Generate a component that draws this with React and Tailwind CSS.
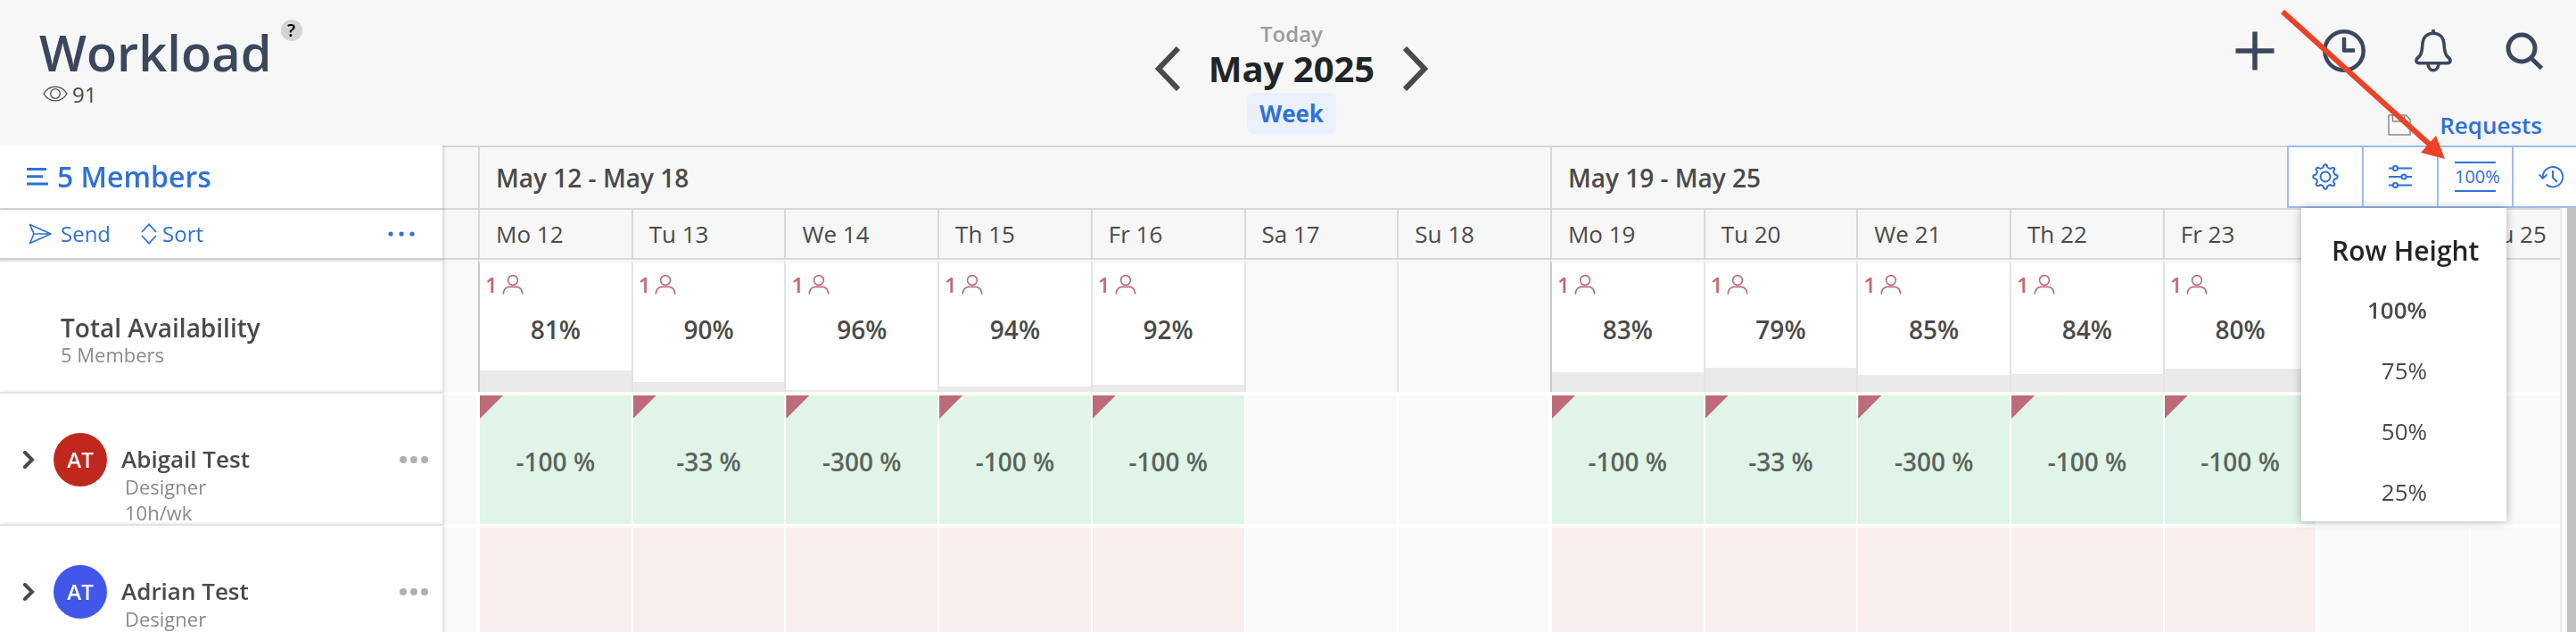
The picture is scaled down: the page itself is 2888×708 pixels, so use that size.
import React, { useState } from 'react';

const weeks = [
  {
    label: 'May 12 - May 18',
    days: [
      { name: 'Mo 12', total: 81, bar: 24, value: '-100 %' },
      { name: 'Tu 13', total: 90, bar: 11, value: '-33 %' },
      { name: 'We 14', total: 96, bar: 2, value: '-300 %' },
      { name: 'Th 15', total: 94, bar: 6, value: '-100 %' },
      { name: 'Fr 16', total: 92, bar: 8, value: '-100 %' },
      { name: 'Sa 17', off: true },
      { name: 'Su 18', off: true },
    ],
  },
  {
    label: 'May 19 - May 25',
    days: [
      { name: 'Mo 19', total: 83, bar: 22, value: '-100 %' },
      { name: 'Tu 20', total: 79, bar: 27, value: '-33 %' },
      { name: 'We 21', total: 85, bar: 19, value: '-300 %' },
      { name: 'Th 22', total: 84, bar: 20, value: '-100 %' },
      { name: 'Fr 23', total: 80, bar: 26, value: '-100 %' },
      { name: 'Sa 24', off: true },
      { name: 'Su 25', off: true },
    ],
  },
];

const members = [
  { name: 'Abigail Test', initials: 'AT', role: 'Designer', hours: '10h/wk', avatar: 'bg-[#c1281d]', booked: true },
  { name: 'Adrian Test', initials: 'AT', role: 'Designer', hours: '10h/wk', avatar: 'bg-[#4157e9]', booked: false },
];

const rowHeights = ['100%', '75%', '50%', '25%'];

const Dots = ({ className, r }) => (
  <svg className={className} viewBox="0 0 34 10" fill="currentColor" aria-hidden="true">
    <circle cx="5" cy="5" r={r} />
    <circle cx="17" cy="5" r={r} />
    <circle cx="29" cy="5" r={r} />
  </svg>
);

const PersonIcon = () => (
  <svg className="w-6 h-6" viewBox="0 0 24 24" fill="none" stroke="currentColor" strokeWidth="1.6" aria-hidden="true">
    <circle cx="12" cy="7" r="5.4" />
    <path d="M1.2 22.5C1.6 17.5 4 14.6 8 14.4h8c4 .2 6.4 3.1 6.8 8.1" />
  </svg>
);

const TopBar = () => (
  <header className="grid grid-cols-[1fr_auto_1fr] h-[163px] shrink-0">
    <div className="pl-11 pt-6">
      <div className="flex items-start">
        <h1 className="text-[56px] leading-[68px] font-semibold text-[#3b475e]">Workload</h1>
        <button type="button" aria-label="Help" className="ml-[10px] -mt-[2px] w-6 h-6 rounded-full bg-[#d4d4d4] text-black text-[20px] leading-6 font-semibold">
          ?
        </button>
      </div>
      <div className="flex items-center gap-[5px] pl-1 -mt-[2px] text-[24px] leading-8 text-[#4a4a4a]">
        <svg className="w-7 h-7" viewBox="0 0 28 28" fill="none" stroke="currentColor" strokeWidth="1.3" aria-hidden="true">
          <path d="M1 13C7 2.500 21 2.500 27 13C21 23.500 7 23.500 1 13Z" />
          <circle cx="14" cy="13" r="5.300" />
        </svg>
        <span>91</span>
      </div>
    </div>

    <div className="flex flex-col items-center pl-2 pt-5">
      <button type="button" className="text-[24px] leading-9 font-semibold text-[#9b9b9b]">Today</button>
      <div className="flex items-center gap-8 -mt-1">
        <button type="button" aria-label="Previous">
          <svg className="w-7 h-[50px]" viewBox="0 0 28 50" fill="none" stroke="#4a4a4a" strokeWidth="6" aria-hidden="true">
            <path d="M26 2L4 25L26 48" />
          </svg>
        </button>
        <h2 className="text-[40px] leading-[50px] font-bold text-[#212529]">May 2025</h2>
        <button type="button" aria-label="Next">
          <svg className="w-7 h-[50px]" viewBox="0 0 28 50" fill="none" stroke="#4a4a4a" strokeWidth="6" aria-hidden="true">
            <path d="M2 2L24 25L2 48" />
          </svg>
        </button>
      </div>
      <button type="button" className="mt-[2px] h-[46px] px-[14px] rounded-lg bg-[#eaf1fc] text-[26px] leading-[46px] font-bold text-[#2f71d6]">
        Week
      </button>
    </div>

    <div className="flex flex-col items-end pt-8 pr-[35px]">
      <div className="flex items-center gap-[50px] text-[#3b475e]">
        <button type="button" aria-label="Add">
          <svg className="w-[50px] h-[50px]" viewBox="0 0 50 50" fill="none" stroke="currentColor" strokeWidth="5.5" aria-hidden="true">
            <path d="M25 3.500v43M3.500 25h43" />
          </svg>
        </button>
        <button type="button" aria-label="Time">
          <svg className="w-[50px] h-[50px]" viewBox="0 0 50 50" fill="none" stroke="currentColor" strokeWidth="4.5" aria-hidden="true">
            <circle cx="25" cy="25" r="21.700" />
            <path d="M25 10v14.500h12" strokeLinejoin="round" />
          </svg>
        </button>
        <button type="button" aria-label="Notifications">
          <svg className="w-[50px] h-[50px]" viewBox="0 0 50 50" fill="none" stroke="currentColor" strokeWidth="3.6" strokeLinejoin="round" aria-hidden="true">
            <path d="M25 5C18 5.500 13.500 10 13 17c-.4 7-1 11.500-3.500 14-3 2.500-4 3.500-3.500 5.500.4 1.500 1.500 2.200 3.500 2.200h31c2 0 3.100-.7 3.500-2.200.5-2-.5-3-3.500-5.500-2.500-2.500-3.100-7-3.500-14-.5-7-5-11.500-12-12Z" />
            <path d="M25 1v5M19 40c.5 4 3 6.800 6 6.800s5.500-2.800 6-6.800" />
          </svg>
        </button>
        <button type="button" aria-label="Search">
          <svg className="w-[50px] h-[50px]" viewBox="0 0 50 50" fill="none" stroke="currentColor" strokeWidth="5" aria-hidden="true">
            <circle cx="24" cy="22" r="15" />
            <path d="M34.500 33L46.500 44.500" />
          </svg>
        </button>
      </div>
      <div className="flex items-center gap-8 mt-10 pr-[3px]">
        <button type="button" aria-label="Save" className="text-[#8a8a8a]">
          <svg className="w-[26px] h-[26px]" viewBox="0 0 26 26" fill="none" stroke="currentColor" strokeWidth="1.5" strokeLinejoin="round" aria-hidden="true">
            <path d="M1 2h19.500l4.500 5v17H1Z" />
            <path d="M5.500 2v7h13V2M14.500 3v3.500" />
          </svg>
        </button>
        <a href="#requests" className="text-[26px] leading-9 font-semibold text-[#2f71d6]">Requests</a>
      </div>
    </div>
  </header>
);

const Toolbar = ({ rowHeight, setRowHeight }) => (
  <div className="absolute top-0 right-0 z-20 text-[#2f71d6]">
    <div className="flex h-[70px] border-2 border-r-0 border-[#9dbcf3] bg-white divide-x-2 divide-[#9dbcf3]">
      <button type="button" aria-label="Settings" className="w-[84px] flex items-center justify-center">
        <svg className="w-[30px] h-[30px]" viewBox="0 0 30 30" fill="none" stroke="currentColor" strokeWidth="2" strokeLinejoin="round" aria-hidden="true">
          <circle cx="15" cy="15" r="5.5" />
          <path d="M12.600 4.500Q13 1.200 15 1.200T17.400 4.500Q18.500 5.200 20.700 6Q23.400 3.800 24.800 5.200T24 9.300Q24.600 11.300 25.500 12.600Q28.800 13 28.800 15T25.500 17.400Q24.600 18.700 24 20.700Q26.200 23.400 24.800 24.800T20.700 24Q18.500 24.800 17.400 25.500Q17 28.800 15 28.800T12.600 25.500Q11.500 24.800 9.300 24Q6.600 26.200 5.200 24.800T6 20.700Q5.400 18.700 4.500 17.400Q1.200 17 1.200 15T4.500 12.600Q5.400 11.300 6 9.300Q3.800 6.600 5.200 5.200T9.300 6Q11.500 5.200 12.600 4.500Z" />
        </svg>
      </button>
      <button type="button" aria-label="Filters" className="w-[84px] flex items-center justify-center">
        <svg className="w-[26px] h-[26px]" viewBox="0 0 26 26" fill="none" stroke="currentColor" strokeWidth="2" aria-hidden="true">
          <path d="M0 3.500h5M10 3.500h16M0 13h14.500M19.500 13H26M0 22.500h5M10 22.500h16" />
          <circle cx="7.5" cy="3.5" r="2.6" />
          <circle cx="17" cy="13" r="2.6" />
          <circle cx="7.5" cy="22.5" r="2.6" />
        </svg>
      </button>
      <button type="button" className="w-[84px] flex items-center justify-center">
        <span className="w-[46px] border-y-2 border-[#2f71d6] text-left text-[20px] leading-[30px]">{rowHeight}</span>
      </button>
      <button type="button" aria-label="History" className="w-[70px] flex items-center pl-7">
        <svg className="w-[28px] h-[28px]" viewBox="0 0 28 28" fill="none" stroke="currentColor" strokeWidth="1.9" aria-hidden="true">
          <path d="M4.800 14.500A11.200 11.200 0 1 1 8.500 22.500" />
          <path d="M.8 11.500L4.800 15.800L9.500 11.500M16 7v8l5 5" />
        </svg>
      </button>
    </div>
    <div className="ml-4 w-[230px] h-[351px] pt-7 bg-white shadow-[0_0_10px_rgba(0,0,0,0.3)]">
      <h3 className="pl-[34px] text-[30px] leading-[40px] font-semibold text-[#212529]">Row Height</h3>
      <ul className="mt-3 pr-[89px] text-right text-[26px] text-[#4a4a4a]">
        {rowHeights.map((h) => (
          <li key={h}>
            <button
              type="button"
              onClick={() => setRowHeight(h)}
              className={h === rowHeight ? 'h-[68px] font-semibold' : 'h-[68px]'}
            >
              {h}
            </button>
          </li>
        ))}
      </ul>
    </div>
  </div>
);

const Schedule = () => {
  const days = weeks.flatMap((w) => w.days.map((d, i) => ({ ...d, first: i === 0, last: i === 6 })));

  return (
    <table className="w-[2940px] table-fixed border-separate border-spacing-0 text-left">
      <colgroup>
        <col className="w-[496px]" />
        <col className="w-10" />
        {days.map((d) => (
          <col key={d.name} />
        ))}
      </colgroup>
      <thead>
        <tr className="h-[72px]">
          <th className="sticky left-0 z-10 bg-white border-b-2 border-[#d8d8d8] pl-[30px] shadow-[2px_0_4px_rgba(0,0,0,0.12)]">
            <button type="button" className="flex items-center gap-[10px] text-[32px] leading-10 font-semibold text-[#2f71d6]">
              <svg className="w-6 h-5" viewBox="0 0 24 20" fill="none" stroke="currentColor" strokeWidth="3" aria-hidden="true">
                <path d="M0 1.500h22M0 9.800h18M0 18h24" />
              </svg>
              5 Members
            </button>
          </th>
          <th className="border-y-2 border-[#d8d8d8]"></th>
          {weeks.map((w) => (
            <th key={w.label} colSpan={7} className="border-y-2 border-l-2 border-[#d8d8d8] pl-[18px] text-[28px] leading-10 font-semibold">
              {w.label}
            </th>
          ))}
        </tr>
        <tr className="h-[56px]">
          <th className="sticky left-0 z-10 bg-white border-b-2 border-[#d8d8d8] pl-8 pr-7 font-normal shadow-[2px_0_4px_rgba(0,0,0,0.12)]">
            <div className="flex items-center text-[24px] leading-8 text-[#2f71d6]">
              <button type="button" className="flex items-center gap-[10px]">
                <svg className="w-[26px] h-6" viewBox="0 0 26 24" fill="none" stroke="currentColor" strokeWidth="1.7" strokeLinejoin="round" aria-hidden="true">
                  <path d="M1.500 1.500L25 12L1.500 22.500L6 12ZM6 12h19" />
                </svg>
                Send
              </button>
              <button type="button" className="ml-[34px] flex items-center gap-[6px]">
                <svg className="w-[18px] h-6" viewBox="0 0 18 24" fill="none" stroke="currentColor" strokeWidth="1.7" aria-hidden="true">
                  <path d="M1 10L9 1.300L17 10M1 14L9 22.700L17 14" />
                </svg>
                Sort
              </button>
              <button type="button" aria-label="More" className="ml-auto">
                <Dots className="w-9 h-[10px]" r="2.6" />
              </button>
            </div>
          </th>
          <th className="border-b-2 border-[#d8d8d8]"></th>
          {days.map((d) => (
            <th key={d.name} className="border-b-2 border-l-2 border-[#d8d8d8] pl-[18px] text-[26px] leading-8 font-normal">
              {d.name}
            </th>
          ))}
        </tr>
      </thead>
      <tbody>
        <tr className="h-[148px]">
          <th className="sticky left-0 z-10 bg-white border-t-2 border-[#e3e3e3] pl-[68px] pt-[30px] font-normal shadow-[2px_0_4px_rgba(0,0,0,0.12)]">
            <div className="text-[28px] leading-8 font-semibold">Total Availability</div>
            <div className="text-[22px] leading-7 text-[#8a8a8a]">5 Members</div>
          </th>
          <td className="border-t-4 border-[#f7f7f7] bg-[#f9f9f9]"></td>
          {days.map((d) => (
            <td
              key={d.name}
              className={`border-t-4 border-l-2 border-t-[#f7f7f7] p-0 ${d.first ? 'border-l-[#c8c8c8]' : 'border-l-[#e3e3e3]'} ${d.off ? 'bg-[#f9f9f9]' : 'bg-white'}`}
            >
              {!d.off && (
                <div className="flex flex-col h-36">
                  <div className="flex items-center gap-[5px] pl-[6px] pt-2 text-[24px] leading-8 font-semibold text-[#bd6b79]">
                    1<PersonIcon />
                  </div>
                  <div className="mt-[14px] text-center text-[28px] leading-10 font-semibold">{d.total}%</div>
                  <div className="mt-auto bg-[#eaeaea]" style={{ height: d.bar }}></div>
                </div>
              )}
            </td>
          ))}
        </tr>
        {members.map((m) => (
          <tr key={m.name} className="h-[148px]">
            <th className="sticky left-0 z-10 bg-white border-t-2 border-[#e3e3e3] p-0 font-normal shadow-[2px_0_4px_rgba(0,0,0,0.12)]">
              <div className="flex h-[146px] pl-6 pr-[14px] pt-11">
                <button type="button" aria-label="Expand" className="h-[60px]">
                  <svg className="w-4 h-5" viewBox="0 0 16 20" fill="none" stroke="#4a4a4a" strokeWidth="4" strokeLinecap="round" aria-hidden="true">
                    <path d="M4 2L12 10L4 18" />
                  </svg>
                </button>
                <div className={`ml-5 w-[60px] h-[60px] rounded-full text-center text-[24px] leading-[60px] font-semibold text-white ${m.avatar}`}>
                  {m.initials}
                </div>
                <div className="ml-4 pt-3">
                  <div className="text-[26px] leading-[34px] font-semibold">{m.name}</div>
                  <div className="pl-1 text-[22px] leading-[29px] text-[#8a8a8a]">{m.role}</div>
                  <div className="pl-1 text-[22px] leading-[29px] text-[#8a8a8a]">{m.hours}</div>
                </div>
                <button type="button" aria-label="More" className="ml-auto h-[60px] text-[#b0b0b0]">
                  <Dots className="w-9 h-[10px]" r="4" />
                </button>
              </div>
            </th>
            <td className="border-t-4 border-r-2 border-white bg-[#f9f9f9]"></td>
            {days.map((d) => (
              <td
                key={d.name}
                className={`border-t-4 border-l-2 border-white p-0 text-center text-[28px] font-semibold text-[#59645d] ${d.last ? 'border-r-2' : ''} ${d.off ? 'bg-[#f9f9f9]' : m.booked ? 'bg-[#e0f4e7]' : 'bg-[#f8eeed]'}`}
              >
                {m.booked && !d.off && (
                  <div className="relative h-36 leading-[148px]">
                    <span className="absolute left-0 top-0 w-[26px] h-[26px] bg-[#bd6b79] [clip-path:polygon(0_0,100%_0,0_100%)]"></span>
                    {d.value}
                  </div>
                )}
              </td>
            ))}
          </tr>
        ))}
      </tbody>
    </table>
  );
};

const App = () => {
  const [rowHeight, setRowHeight] = useState('100%');

  return (
    <div className="relative flex flex-col h-screen overflow-hidden bg-[#f7f7f7] text-[#4a4a4a] font-['Open_Sans','Noto_Sans',sans-serif]">
      <TopBar />
      <main className="relative flex flex-1 min-h-0">
        <div className="flex-1 min-w-0 overflow-hidden border-r-2 border-[#e8e8e8]">
          <Schedule />
        </div>
        <div className="w-4 shrink-0 border-l-[6px] border-[#f9f9f9] bg-[#c1c1c1]"></div>
        <Toolbar rowHeight={rowHeight} setRowHeight={setRowHeight} />
      </main>
      <svg className="absolute right-[140px] top-0 z-30 w-[200px] h-[190px] pointer-events-none" viewBox="0 0 200 190" aria-hidden="true">
        <path d="M11 13L176 162" stroke="#ec4226" strokeWidth="6" />
        <path d="M193 178L183 152L166 171Z" fill="#ec4226" />
      </svg>
    </div>
  );
};

export default App;
